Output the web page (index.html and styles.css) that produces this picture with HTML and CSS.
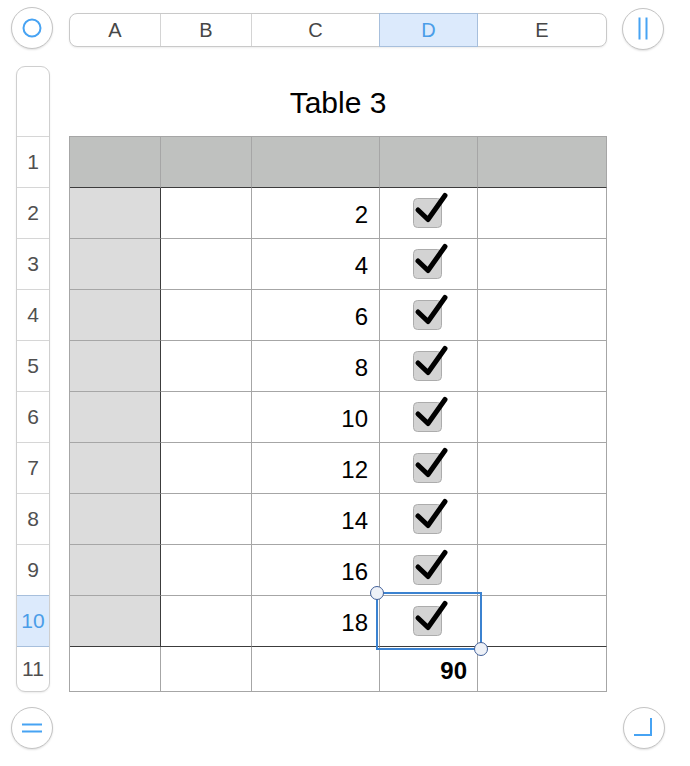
FILE: index.html
```html
<!DOCTYPE html>
<html>
<head>
<meta charset="utf-8">
<title>Table 3</title>
<link rel="stylesheet" href="styles.css">
</head>
<body>
<div class="page">
  <div class="topbar">
    <button class="round" aria-label="Select all">
      <svg width="42" height="42" viewBox="0 0 42 42"><circle cx="21" cy="21" r="8.5" fill="none" stroke="#47a3f3" stroke-width="2"/></svg>
    </button>
    <div class="colheads">
      <div class="ch">A</div>
      <div class="ch">B</div>
      <div class="ch">C</div>
      <div class="ch sel">D</div>
      <div class="ch">E</div>
    </div>
    <button class="round" aria-label="Columns">
      <svg width="42" height="42" viewBox="0 0 42 42"><path d="M17.5 9.5V31.5M24.5 9.5V31.5" stroke="#47a3f3" stroke-width="2" fill="none"/></svg>
    </button>
  </div>

  <div class="main">
    <div class="rowheads">
      <div class="rh corner"></div>
      <div class="rh">1</div>
      <div class="rh">2</div>
      <div class="rh">3</div>
      <div class="rh">4</div>
      <div class="rh">5</div>
      <div class="rh">6</div>
      <div class="rh">7</div>
      <div class="rh">8</div>
      <div class="rh">9</div>
      <div class="rh sel">10</div>
      <div class="rh last">11</div>
    </div>

    <div class="sheet">
      <div class="title">Table 3</div>
      <div class="grid">
        <div class="cell head"></div><div class="cell head"></div><div class="cell head"></div><div class="cell head"></div><div class="cell head"></div>

        <div class="cell hcol"></div><div class="cell"></div><div class="cell num">2</div><div class="cell chk"><svg class="cb" width="38" height="38" viewBox="0 0 38 38"><rect x="3.5" y="4.5" width="28" height="29" rx="4" fill="#d3d3d3" stroke="#acacac"/><path d="M8 16L18 25.5L35 1.5" fill="none" stroke="#000" stroke-width="5" stroke-linecap="round" stroke-linejoin="round"/></svg></div><div class="cell"></div>
        <div class="cell hcol"></div><div class="cell"></div><div class="cell num">4</div><div class="cell chk"><svg class="cb" width="38" height="38" viewBox="0 0 38 38"><rect x="3.5" y="4.5" width="28" height="29" rx="4" fill="#d3d3d3" stroke="#acacac"/><path d="M8 16L18 25.5L35 1.5" fill="none" stroke="#000" stroke-width="5" stroke-linecap="round" stroke-linejoin="round"/></svg></div><div class="cell"></div>
        <div class="cell hcol"></div><div class="cell"></div><div class="cell num">6</div><div class="cell chk"><svg class="cb" width="38" height="38" viewBox="0 0 38 38"><rect x="3.5" y="4.5" width="28" height="29" rx="4" fill="#d3d3d3" stroke="#acacac"/><path d="M8 16L18 25.5L35 1.5" fill="none" stroke="#000" stroke-width="5" stroke-linecap="round" stroke-linejoin="round"/></svg></div><div class="cell"></div>
        <div class="cell hcol"></div><div class="cell"></div><div class="cell num">8</div><div class="cell chk"><svg class="cb" width="38" height="38" viewBox="0 0 38 38"><rect x="3.5" y="4.5" width="28" height="29" rx="4" fill="#d3d3d3" stroke="#acacac"/><path d="M8 16L18 25.5L35 1.5" fill="none" stroke="#000" stroke-width="5" stroke-linecap="round" stroke-linejoin="round"/></svg></div><div class="cell"></div>
        <div class="cell hcol"></div><div class="cell"></div><div class="cell num">10</div><div class="cell chk"><svg class="cb" width="38" height="38" viewBox="0 0 38 38"><rect x="3.5" y="4.5" width="28" height="29" rx="4" fill="#d3d3d3" stroke="#acacac"/><path d="M8 16L18 25.5L35 1.5" fill="none" stroke="#000" stroke-width="5" stroke-linecap="round" stroke-linejoin="round"/></svg></div><div class="cell"></div>
        <div class="cell hcol"></div><div class="cell"></div><div class="cell num">12</div><div class="cell chk"><svg class="cb" width="38" height="38" viewBox="0 0 38 38"><rect x="3.5" y="4.5" width="28" height="29" rx="4" fill="#d3d3d3" stroke="#acacac"/><path d="M8 16L18 25.5L35 1.5" fill="none" stroke="#000" stroke-width="5" stroke-linecap="round" stroke-linejoin="round"/></svg></div><div class="cell"></div>
        <div class="cell hcol"></div><div class="cell"></div><div class="cell num">14</div><div class="cell chk"><svg class="cb" width="38" height="38" viewBox="0 0 38 38"><rect x="3.5" y="4.5" width="28" height="29" rx="4" fill="#d3d3d3" stroke="#acacac"/><path d="M8 16L18 25.5L35 1.5" fill="none" stroke="#000" stroke-width="5" stroke-linecap="round" stroke-linejoin="round"/></svg></div><div class="cell"></div>
        <div class="cell hcol"></div><div class="cell"></div><div class="cell num">16</div><div class="cell chk"><svg class="cb" width="38" height="38" viewBox="0 0 38 38"><rect x="3.5" y="4.5" width="28" height="29" rx="4" fill="#d3d3d3" stroke="#acacac"/><path d="M8 16L18 25.5L35 1.5" fill="none" stroke="#000" stroke-width="5" stroke-linecap="round" stroke-linejoin="round"/></svg></div><div class="cell"></div>
        <div class="cell hcol lastbody"></div><div class="cell lastbody"></div><div class="cell num lastbody">18</div><div class="cell chk lastbody active"><svg class="cb" width="38" height="38" viewBox="0 0 38 38"><rect x="3.5" y="4.5" width="28" height="29" rx="4" fill="#d3d3d3" stroke="#acacac"/><path d="M8 16L18 25.5L35 1.5" fill="none" stroke="#000" stroke-width="5" stroke-linecap="round" stroke-linejoin="round"/></svg><div class="selection"><span class="handle tl"></span><span class="handle br"></span></div></div><div class="cell lastbody"></div>

        <div class="cell foot"></div><div class="cell foot"></div><div class="cell foot"></div><div class="cell foot total">90</div><div class="cell foot"></div>
      </div>
    </div>
  </div>

  <div class="bottombar">
    <button class="round" aria-label="Rows">
      <svg width="42" height="42" viewBox="0 0 42 42"><path d="M11 17.5H31M11 24.5H31" stroke="#47a3f3" stroke-width="2" fill="none"/></svg>
    </button>
    <button class="round" aria-label="Resize">
      <svg width="42" height="42" viewBox="0 0 42 42"><path d="M11 28H28V11" stroke="#47a3f3" stroke-width="2" fill="none"/></svg>
    </button>
  </div>
</div>
</body>
</html>
```

FILE: styles.css
```css
* { box-sizing: border-box; }

html, body {
  margin: 0;
  padding: 0;
  background: #ffffff;
}

body {
  font-family: "Liberation Sans", Arial, Helvetica, sans-serif;
  color: #000;
}

.page {
  width: 690px;
  height: 766px;
  overflow: hidden;
}

.round {
  width: 42px;
  height: 42px;
  padding: 0;
  margin: 0;
  border: 1px solid #c4c4c4;
  border-radius: 50%;
  background: #fff;
  box-shadow: 0 1px 2px rgba(0, 0, 0, 0.12);
  display: flex;
  align-items: center;
  justify-content: center;
  flex: none;
}

.round svg {
  display: block;
  margin: -1px;
}

/* top bar */
.topbar {
  height: 66px;
  padding: 7px 0 0 11px;
  display: flex;
  align-items: flex-start;
}

.colheads {
  margin: 6px 0 0 16px;
  width: 538px;
  height: 34px;
  border: 1px solid #c9c9c9;
  border-radius: 8px;
  background: #fff;
  box-shadow: 0 1px 2px rgba(0, 0, 0, 0.08);
  display: grid;
  grid-template-columns: 91px 91px 128px 98px 128px;
}

.ch {
  border-right: 1px solid #d4d4d4;
  display: flex;
  align-items: center;
  justify-content: center;
  font-size: 20px;
  color: #474747;
  position: relative;
}

.ch:last-child { border-right: none; }

.ch.sel {
  background: #dceafc;
  color: #4a9de8;
  border-right-color: #a7bfdc;
}

.ch.sel::after {
  content: "";
  position: absolute;
  left: -1px;
  right: -1px;
  top: -1px;
  bottom: -1px;
  border: 1px solid #a7bfdc;
}

.topbar .round:last-child {
  margin: 1px 0 0 15px;
}

/* main */
.main {
  display: flex;
  align-items: flex-start;
  padding-left: 16px;
}

.rowheads {
  width: 34px;
  border: 1px solid #cfcfcf;
  border-radius: 9px;
  background: #fff;
  box-shadow: 0 1px 2px rgba(0, 0, 0, 0.08);
  display: flex;
  flex-direction: column;
}

.rh {
  height: 51px;
  border-bottom: 1px solid #d6d6d6;
  display: flex;
  align-items: center;
  justify-content: center;
  font-size: 21px;
  color: #505050;
}

.rh.corner {
  height: 70px;
  border-radius: 8px 8px 0 0;
}

.rh.sel {
  background: #dceafc;
  color: #4a9de8;
  border-bottom-color: #a7bfdc;
  box-shadow: 0 -1px 0 #a7bfdc;
}

.rh.last {
  height: 44px;
  border-bottom: none;
  border-radius: 0 0 8px 8px;
}

.sheet {
  margin-left: 19px;
  width: 538px;
}

.title {
  height: 70px;
  display: flex;
  align-items: center;
  justify-content: center;
  padding-top: 3px;
  font-size: 30px;
  color: #000;
}

.grid {
  display: grid;
  grid-template-columns: 91px 91px 128px 98px 129px;
  grid-template-rows: repeat(10, 51px) 45px;
  border-left: 1px solid #a6a6a6;
  border-top: 1px solid #a6a6a6;
}

.cell {
  border-right: 1px solid #a6a6a6;
  border-bottom: 1px solid #a6a6a6;
  background: #fff;
}

.cell.head {
  background: #bfc1bf;
  border-bottom-color: #3c3c3c;
}

.cell.hcol {
  background: #dcdcdc;
  border-right-color: #3c3c3c;
}

.cell.lastbody {
  border-bottom-color: #3c3c3c;
}

.cell.num {
  display: flex;
  align-items: center;
  justify-content: flex-end;
  padding: 4px 11px 0 0;
  font-size: 24px;
}

.cell.chk {
  display: flex;
  align-items: center;
  justify-content: center;
}

.cb {
  display: block;
  overflow: visible;
}

.cell.total {
  display: flex;
  align-items: center;
  justify-content: flex-end;
  padding: 4px 10px 0 0;
  font-size: 24px;
  font-weight: bold;
}

.cell.active {
  position: relative;
}

.selection {
  position: absolute;
  left: -4px;
  top: -4px;
  right: -5px;
  bottom: -4px;
  border: 2px solid #3b82d0;
  z-index: 2;
}

.handle {
  position: absolute;
  width: 14px;
  height: 14px;
  border-radius: 50%;
  background: #eef1f7;
  border: 1.5px solid #41609a;
}

.handle.tl { left: -8px; top: -8px; }
.handle.br { right: -8px; bottom: -8px; }

/* bottom */
.bottombar {
  display: flex;
  justify-content: space-between;
  padding: 15px 25px 0 11px;
}
```
